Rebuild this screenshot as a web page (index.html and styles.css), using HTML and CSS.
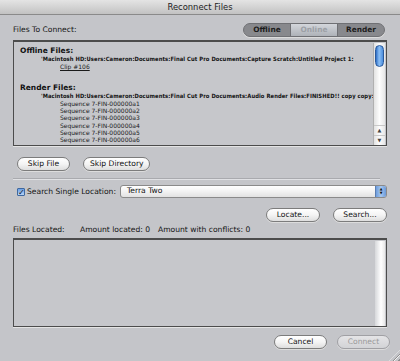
FILE: index.html
```html
<!DOCTYPE html>
<html lang="en">
<head>
<meta charset="UTF-8">
<title>Reconnect Files</title>
<link rel="stylesheet" href="styles.css">
</head>
<body>

<div class="window">

<div class="titlebar">Reconnect Files</div>

<div class="content">

<div class="head">
<span class="label">Files To Connect:</span>
<div class="segmented">
<span class="seg">Offline</span>
<span class="seg selected">Online</span>
<span class="seg">Render</span>
</div>
</div>

<div class="listbox">
<div class="listtext">
<div class="group">Offline Files:</div>
<div class="path">'Macintosh HD:Users:Cameron:Documents:Final Cut Pro Documents:Capture Scratch:Untitled Project 1:</div>
<div class="item"><u>Clip #106</u></div>
<div class="group render">Render Files:</div>
<div class="path">'Macintosh HD:Users:Cameron:Documents:Final Cut Pro Documents:Audio Render Files:FINISHED!! copy copy:</div>
<div class="item">Sequence 7-FIN-000000a1</div>
<div class="item">Sequence 7-FIN-000000a2</div>
<div class="item">Sequence 7-FIN-000000a3</div>
<div class="item">Sequence 7-FIN-000000a4</div>
<div class="item">Sequence 7-FIN-000000a5</div>
<div class="item">Sequence 7-FIN-000000a6</div>
</div>
<div class="scrollbar">
<div class="track"><div class="thumb"></div></div>
<div class="arrow">&#9650;</div>
<div class="arrow">&#9660;</div>
</div>
</div>

<div class="btnrow">
<button class="btn">Skip File</button>
<button class="btn">Skip Directory</button>
</div>

<div class="separator"></div>

<div class="searchrow">
<span class="check">&#10003;</span>
<span class="label">Search Single Location:</span>
<div class="popup">
<span class="popup-text">Terra Two</span>
<span class="popup-arrows">&#9650;<br>&#9660;</span>
</div>
</div>

<div class="locaterow">
<button class="btn">Locate...</button>
<button class="btn">Search...</button>
</div>

<div class="statusrow">
<span class="label">Files Located:</span>
<span class="label">Amount located: 0</span>
<span class="label">Amount with conflicts: 0</span>
</div>

<div class="resultbox">
<div class="resultarea"></div>
<div class="emptytrack"></div>
</div>

<div class="bottomrow">
<button class="btn">Cancel</button>
<button class="btn disabled">Connect</button>
</div>

</div>

<div class="grip"></div>

</div>

</body>
</html>
```

FILE: styles.css
```css
body{
    margin:0;
    font-family:"DejaVu Sans",sans-serif;
    background:#c4c5c9;
    color:#111;
}

.window{
    position:relative;
    width:400px;
    height:361px;
    overflow:hidden;
}

.titlebar{
    height:14px;
    line-height:14px;
    text-align:center;
    font-size:8.4px;
    color:#222;
    background:linear-gradient(#e4e4e4,#c2c2c2);
    border-bottom:1px solid #8a8a8a;
}

.content{
    padding:0 13px;
}

.label{
    font-size:7.6px;
    color:#151515;
}

.head{
    display:flex;
    justify-content:space-between;
    align-items:center;
    margin-top:8px;
    height:13px;
}

.segmented{
    display:flex;
    margin-right:2px;
    background:#88898d;
    border:1px solid #6f7074;
    border-radius:7px;
    box-shadow:0 1px 0 #dcdcdc;
    overflow:hidden;
}

.seg{
    width:46px;
    height:12px;
    line-height:12px;
    text-align:center;
    font-size:7.4px;
    font-weight:bold;
    color:#1c1c1c;
}

.seg.selected{
    background:linear-gradient(#d3d6db,#aeb2b8);
    color:#9ca0a6;
    border-left:1px solid #6f7074;
    border-right:1px solid #6f7074;
}

.listbox{
    display:flex;
    margin-top:4px;
    height:103px;
    border:1px solid #4c4c4c;
    border-top-width:2px;
    box-shadow:0 1px 0 #e4e4e4;
    background:#c6c7cb;
}

.listtext{
    flex:1;
    padding:4px 0 0 6px;
    overflow:hidden;
    white-space:nowrap;
}

.group{
    font-size:7.5px;
    font-weight:bold;
    line-height:10px;
    color:#111;
}

.group.render{
    margin-top:12.5px;
}

.path{
    padding-left:21px;
    font-family:"DejaVu Sans Condensed","DejaVu Sans",sans-serif;
    font-size:5.8px;
    font-weight:bold;
    letter-spacing:0.08px;
    line-height:7px;
}

.item{
    padding-left:40px;
    font-size:6px;
    line-height:7.3px;
    color:#1a1a1a;
}

.scrollbar{
    display:flex;
    flex-direction:column;
    width:11px;
    margin:1px 1px 0 0;
    background:linear-gradient(90deg,#e2e2e2,#fdfdfd 50%,#e6e6e6);
    border-left:1px solid #b0b0b0;
}

.track{
    flex:1;
    padding-top:2px;
}

.thumb{
    width:9px;
    height:22px;
    margin-left:1px;
    border-radius:5px;
    background:linear-gradient(90deg,#2f6fc6,#8cc0f6 45%,#4b8ddc);
    border:1px solid #2a5a9c;
    box-sizing:border-box;
}

.arrow{
    height:9px;
    line-height:9px;
    text-align:center;
    font-size:5px;
    color:#444;
    border-top:1px solid #c8c8c8;
}

.btnrow{
    display:flex;
    gap:13px;
    margin-top:11px;
    padding-left:4px;
}

.btn{
    height:14px;
    padding:0 6px;
    font-family:"DejaVu Sans",sans-serif;
    font-size:7.6px;
    color:#111;
    white-space:nowrap;
    background:linear-gradient(#ffffff,#f4f4f4 50%,#dedede);
    border:1px solid #7c7c7c;
    border-radius:7px;
    box-shadow:0 1px 0 #dcdcdc;
    line-height:12px;
}

.btnrow .btn:first-child{
    width:53px;
}

.btnrow .btn:last-child{
    width:67px;
}

.separator{
    margin:7px 7px 0 0;
    height:0;
    border-top:1px solid #a9aaae;
    border-bottom:1px solid #e0e1e4;
}

.searchrow{
    display:flex;
    align-items:center;
    margin-top:6px;
    padding-left:4px;
    height:11px;
}

.check{
    width:8px;
    height:8px;
    margin-right:2px;
    font-size:8px;
    line-height:8px;
    text-align:center;
    color:#112;
    background:linear-gradient(#6a9ee4,#b8d4f4);
    border:1px solid #3e68a0;
    border-radius:1px;
    box-sizing:border-box;
    overflow:visible;
}

.popup{
    display:flex;
    flex:1;
    margin-left:4px;
    height:11px;
    border:1px solid #8a8a8a;
    border-radius:3px;
    background:linear-gradient(#ffffff,#f2f2f2 50%,#e2e2e2);
    overflow:hidden;
}

.popup-text{
    flex:1;
    padding-left:6px;
    font-size:7.6px;
    line-height:10px;
}

.popup-arrows{
    width:10px;
    font-size:3.5px;
    line-height:4px;
    text-align:center;
    padding-top:1px;
    color:#111;
    background:linear-gradient(90deg,#6e9ddc,#a6c8f0 50%,#6a98d8);
    border-left:1px solid #5a7eb2;
}

.locaterow{
    display:flex;
    justify-content:flex-end;
    gap:13px;
    margin-top:11px;
}

.locaterow .btn{
    width:54px;
}

.statusrow{
    display:flex;
    margin-top:2px;
    height:10px;
    align-items:center;
}

.statusrow .label:nth-child(1){
    width:67px;
}

.statusrow .label:nth-child(2){
    width:78px;
}

.resultbox{
    display:flex;
    margin-top:4px;
    height:86px;
    border:1px solid #4c4c4c;
    border-top-width:2px;
    box-shadow:0 1px 0 #e4e4e4;
    background:#c6c7cb;
}

.resultarea{
    flex:1;
}

.emptytrack{
    width:10px;
    margin:1px 1px 0 0;
    background:linear-gradient(90deg,#d6d7da,#ffffff 60%,#e8e8e8);
}

.bottomrow{
    display:flex;
    justify-content:flex-end;
    gap:10px;
    margin:8px -3px 0 0;
}

.bottomrow .btn{
    width:53px;
}

.btn.disabled{
    color:#9a9a9a;
    background:linear-gradient(#e4e4e6,#d2d3d6);
    border-color:#a0a0a4;
}

.grip{
    position:absolute;
    right:0;
    bottom:0;
    width:11px;
    height:11px;
    background:repeating-linear-gradient(135deg,transparent 0 2px,#8e8e8e 2px 3px,#f2f2f2 3px 4px);
    clip-path:polygon(100% 0,100% 100%,0 100%);
}
```
